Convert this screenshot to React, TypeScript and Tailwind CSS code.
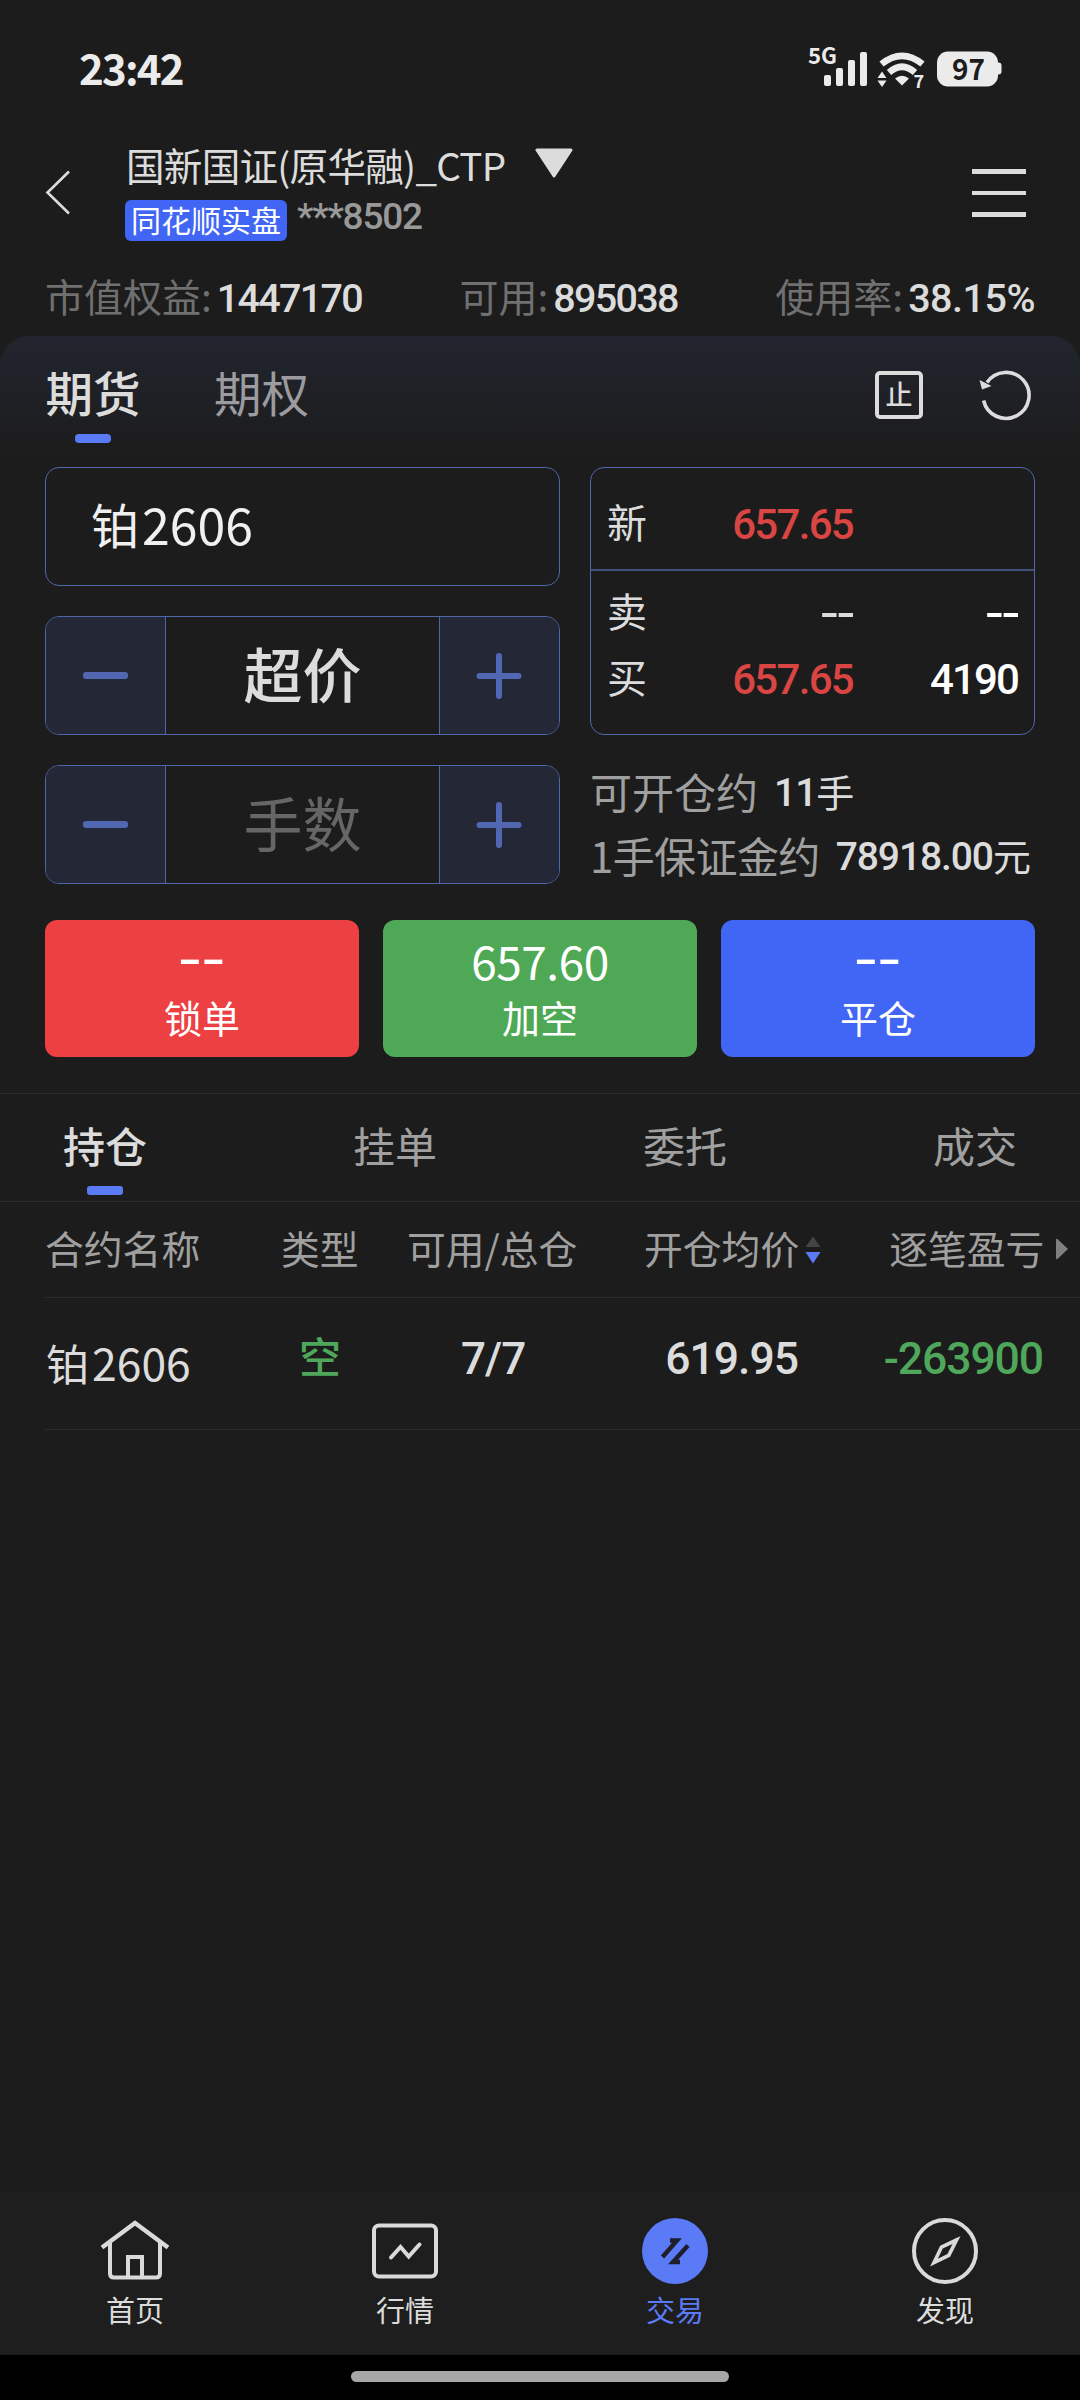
import type { ReactNode } from "react";

const NUM = "font-['Roboto','Liberation_Sans',sans-serif] font-medium leading-none whitespace-nowrap";

function StatusBar() {
  return (
    <div className="flex h-[138px] shrink-0 items-center pl-[79px] pr-[78px] text-[#ebebeb]">
      <span className="pb-[5px] text-[42px] leading-none font-bold tracking-[-1.8px]">23:42</span>
      <svg className="ml-auto overflow-visible" width="194" height="70" viewBox="0 -10 194 70" fill="#ebebeb">
        <text x="0" y="20" fontFamily="Noto Sans CJK SC, sans-serif" fontSize="22.5" fontWeight="700" textLength="29" lengthAdjust="spacingAndGlyphs">5G</text>
        <rect x="16" y="31" width="7" height="11" rx="2" />
        <rect x="28" y="24" width="7" height="18" rx="2" />
        <rect x="40" y="16" width="7" height="26" rx="2" />
        <rect x="52" y="8" width="7" height="34" rx="2" />
        <g fill="none" stroke="#ebebeb" strokeWidth="6.6">
          <path d="M73.500 20 Q94 3.600 114.500 20" />
          <path d="M81 28.500 Q94 17 107 28.500" />
        </g>
        <path d="M87 34.500 Q94 29 101 34.500 L94 41.500 Z" />
        <path d="M69.500 34 L74 27.500 L78.500 34 Z M69.500 36.500 L74 43 L78.500 36.500 Z" />
        <text x="105.500" y="43.500" fontFamily="Noto Sans CJK SC, sans-serif" fontSize="18" fontWeight="700">7</text>
        <rect x="129" y="7.500" width="61" height="35" rx="11" />
        <path d="M189 18.500 h1.5 q3 0 3 3 v6 q0 3 -3 3 h-1.5 Z" />
        <text x="144" y="36" fontFamily="Noto Sans CJK SC, sans-serif" fontSize="29.5" fontWeight="700" fill="#1c1c1c" textLength="33" lengthAdjust="spacingAndGlyphs">97</text>
      </svg>
    </div>
  );
}

function Header() {
  return (
    <div className="flex h-[130px] shrink-0 items-start pt-[8px]">
      <svg className="mt-[24px] ml-[44px] shrink-0" width="28" height="48" viewBox="0 0 28 48" fill="none" stroke="#dcdcdc" strokeWidth="2.6">
        <path d="M25 1.5 L3.5 22.5 L25 43.5" />
      </svg>
      <div className="ml-[53px]">
        <div className="flex h-[40px] items-center">
          <span className="w-[410px] pb-[3px] pl-[1px] text-[38.6px] leading-none tracking-[-0.75px] whitespace-nowrap text-[#dcdcdc]">国新国证(原华融)_CTP</span>
          <svg className="mt-[-5px]" width="38" height="31" viewBox="0 0 38 31" fill="#dcdcdc" stroke="#dcdcdc" strokeWidth="3" strokeLinejoin="round">
            <path d="M2 2 H36 L19 28 Z" />
          </svg>
        </div>
        <div className="mt-[14px] flex h-[41px] items-center">
          <span className="flex h-[41px] w-[162px] items-center justify-center rounded-[6px] bg-[#4166f5] pb-[3px] text-[30px] leading-none whitespace-nowrap text-white">同花顺实盘</span>
          <span className="ml-[10px] pb-[8px] font-['Roboto'] text-[37px] leading-none font-medium tracking-[-1.2px] text-[#999]">***8502</span>
        </div>
      </div>
      <div className="mt-[23px] mr-[54px] ml-auto flex w-[54px] flex-col gap-[17px]">
        <div className="h-[4.5px] bg-[#dcdcdc]" />
        <div className="h-[4.5px] bg-[#dcdcdc]" />
        <div className="h-[4.5px] bg-[#dcdcdc]" />
      </div>
    </div>
  );
}

function Stat({ label, value, spacing }: { label: string; value: string; spacing: string }) {
  return (
    <div className="flex items-center">
      <span className="pb-[8px] text-[39px] leading-none whitespace-nowrap text-[#707070]">{label}</span>
      <span className={`${NUM} ml-[5px] text-[39.5px] text-[#dcdcdc] ${spacing}`}>{value}</span>
    </div>
  );
}

function Stepper({ children }: { children: ReactNode }) {
  return (
    <div className="flex h-[119px] w-[515px] overflow-hidden rounded-[14px] border border-[#4f66aa]">
      <div className="flex w-[120px] items-center justify-center border-r border-[#4f66aa] bg-[#242836]">
        <div className="h-[6.5px] w-[45px] rounded-[3px] bg-[#5267b2]" />
      </div>
      <div className="flex flex-1 items-center justify-center pb-[6px] text-[59px] leading-none">{children}</div>
      <div className="flex w-[120px] items-center justify-center border-l border-[#4f66aa] bg-[#242836] pr-[2px]">
        <svg width="46" height="46" viewBox="0 0 46 46" stroke="#5267b2" strokeWidth="6" strokeLinecap="round">
          <path d="M3.5 23 H42.5 M23 3 V43" />
        </svg>
      </div>
    </div>
  );
}

function QuoteValue({ text }: { text: string }) {
  return <span className={text === "--" ? "inline-block origin-right scale-x-[1.32]" : ""}>{text}</span>;
}

function QuoteRow({ label, price, volume, tone }: { label: string; price: string; volume: string; tone: string }) {
  return (
    <div className="flex h-[66px] items-center">
      <span className="w-[90px] pb-[8px] pl-[16px] text-[40px] leading-none text-[#dcdcdc]">{label}</span>
      <span className={`${NUM} w-[172px] text-right text-[42px] tracking-[-1.7px] ${tone}`}>
        <QuoteValue text={price} />
      </span>
      <span className={`${NUM} w-[165px] text-right text-[42px] tracking-[-1.9px] text-white`}>
        <QuoteValue text={volume} />
      </span>
    </div>
  );
}

function Action({ value, label, bg }: { value: string; label: string; bg: string }) {
  return (
    <div className={`flex h-[137px] w-[314px] flex-col items-center rounded-[12px] text-white ${bg}`}>
      {value === "--" ? (
        <span className="mt-[14px] h-[47px] scale-x-[1.5] font-['Roboto'] text-[46px] leading-[52px] font-medium">{value}</span>
      ) : (
        <span className="mt-[14px] h-[47px] text-[46px] leading-[52px] tracking-[-0.5px]">{value}</span>
      )}
      <span className="mt-[14px] h-[44px] text-[38px] leading-[44px]">{label}</span>
    </div>
  );
}

function NavItem({ label, active, children }: { label: string; active?: boolean; children: ReactNode }) {
  return (
    <div className="flex flex-1 flex-col items-center">
      <svg className="mt-[24px]" width="70" height="70" viewBox="0 0 70 70" fill="none" stroke="#dadada" strokeWidth="4">
        {children}
      </svg>
      <span className={`mt-[7px] text-[29px] leading-[32px] ${active ? "text-[#5b7bf6]" : "text-[#dcdcdc]"}`}>{label}</span>
    </div>
  );
}

export default function App() {
  return (
    <div className="flex h-[2400px] w-[1080px] flex-col overflow-hidden bg-[#1c1c1c] font-['Noto_Sans_CJK_SC',sans-serif]">
      <StatusBar />
      <Header />

      <div className="mb-[6px] flex h-[62px] shrink-0 items-center justify-between pr-[45px] pl-[45px]">
        <Stat label="市值权益:" value="1447170" spacing="tracking-[-1.7px]" />
        <Stat label="可用:" value="895038" spacing="tracking-[-1.7px]" />
        <Stat label="使用率:" value="38.15%" spacing="tracking-[-0.5px]" />
      </div>

      <div className="shrink-0 rounded-t-[30px] bg-[linear-gradient(180deg,#22252f_0px,#1c1c1c_120px)]">
        <div className="flex h-[131px] items-start pt-[29px] pr-[47px] pl-[45px]">
          <div className="flex w-[96px] flex-col items-center">
            <span className="text-[47.5px] leading-[54px] font-medium text-[#dcdcdc]">期货</span>
            <div className="mt-[15px] h-[9px] w-[36px] rounded-[4px] bg-[#5b7bf6]" />
          </div>
          <span className="ml-[73px] text-[47.5px] leading-[54px] text-[#9c9ca0]">期权</span>
          <div className="mt-[6px] ml-auto flex h-[48px] w-[48px] items-center justify-center rounded-[5px] border-4 border-[#dcdcdc] pb-[4px] text-[27px] leading-none font-medium text-[#dcdcdc]">止</div>
          <svg className="mt-[3px] mr-[2px] ml-[54px]" width="54" height="54" viewBox="0 0 54 54" fill="none" stroke="#dcdcdc" strokeWidth="3.6">
            <path d="M6.6 32.5 A23 23 0 1 0 10 14.5" />
            <path d="M2.500 12 L14.500 18 L5 21.5 Z" fill="#dcdcdc" stroke="none" />
          </svg>
        </div>

        <div className="flex justify-between px-[45px]">
          <div className="flex flex-col gap-[30px]">
            <div className="flex h-[119px] w-[515px] items-center rounded-[14px] border border-[#4f66aa] pb-[7px] pl-[45px] text-[48px] leading-none text-[#f0f0f0]">
              铂<span className="ml-[3px] text-[50px]">2606</span>
            </div>
            <Stepper><span className="font-medium text-[#dcdcdc]">超价</span></Stepper>
            <Stepper><span className="text-[#666]">手数</span></Stepper>
          </div>

          <div className="w-[445px]">
            <div className="h-[268px] rounded-[14px] border border-[#4f66aa]">
              <div className="flex h-[103px] items-center border-b-2 border-[#41507f] pt-[13px]">
                <QuoteRow label="新" price="657.65" volume="" tone="text-[#d94543]" />
              </div>
              <div className="mt-[10px]">
                <QuoteRow label="卖" price="--" volume="--" tone="text-[#dcdcdc]" />
                <QuoteRow label="买" price="657.65" volume="4190" tone="text-[#d94543]" />
              </div>
            </div>
            <div className="mt-[26px] flex h-[60px] items-center">
              <span className="text-[42px] leading-none whitespace-nowrap text-[#a0a0a0]">可开仓约</span>
              <span className={`${NUM} ml-[16px] pt-[4px] text-[39px] tracking-[-1px] text-[#dcdcdc]`}>11</span>
              <span className="text-[38px] leading-none text-[#dcdcdc]">手</span>
            </div>
            <div className="mt-[5px] flex h-[58px] items-center whitespace-nowrap">
              <span className="text-[42px] leading-none tracking-[-0.6px] text-[#a0a0a0]">1手保证金约</span>
              <span className={`${NUM} ml-[16px] pt-[4px] text-[39px] tracking-[-1.1px] text-[#dcdcdc]`}>78918.00</span>
              <span className="text-[38px] leading-none text-[#dcdcdc]">元</span>
            </div>
          </div>
        </div>

        <div className="mt-[36px] flex justify-between px-[45px]">
          <Action value="--" label="锁单" bg="bg-[#ec4042]" />
          <Action value="657.60" label="加空" bg="bg-[#4ea855]" />
          <Action value="--" label="平仓" bg="bg-[#4166f6]" />
        </div>
      </div>

      <div className="mt-[36px] flex h-[108px] shrink-0 justify-between border-t border-[#2d2d2d] px-[63px] pt-[24px] text-[42px] leading-[54px] text-[#a0a0a0]">
        <div className="flex flex-col items-center">
          <span className="font-medium text-[#dcdcdc]">持仓</span>
          <div className="mt-[14px] h-[9px] w-[36px] rounded-[3px] bg-[#5b7bf6]" />
        </div>
        <span>挂单</span>
        <span>委托</span>
        <span>成交</span>
      </div>

      <div className="flex h-[96px] shrink-0 items-center border-t border-[#2d2d2d] pb-[5px] pl-[45px] text-[38.8px] leading-none whitespace-nowrap text-[#a0a0a0]">
        <span className="w-[236px]">合约名称</span>
        <span className="w-[126px]">类型</span>
        <span className="w-[237px]">可用/总仓</span>
        <span>开仓均价</span>
        <svg className="mt-[6px] ml-[6px]" width="16" height="28" viewBox="0 0 16 28">
          <path d="M0.5 11 L8 0.5 L15.5 11 Z" fill="#444" />
          <path d="M0.5 16 L8 27.5 L15.5 16 Z" fill="#5b7bf6" />
        </svg>
        <span className="ml-[68px]">逐笔盈亏</span>
        <svg className="mt-[4px] ml-[11px]" width="14" height="22" viewBox="0 0 14 22">
          <path d="M1 2 Q1 0 3 1.5 L13 11 L3 20.5 Q1 22 1 20 Z" fill="#808080" />
        </svg>
      </div>

      <div className="ml-[45px] flex h-[133px] shrink-0 items-center border-y border-[#2d2d2d] whitespace-nowrap text-[#dcdcdc]">
        <span className="flex w-[254px] items-center pb-[3px] pl-[1px] text-[43px] leading-none">
          铂<span className="ml-[3px] text-[44.5px]">2606</span>
        </span>
        <span className="w-[162px] pb-[17px] text-[42px] leading-none font-medium text-[#4fa75b]">空</span>
        <span className={`${NUM} w-[180px] pb-[9px] text-[44px] tracking-[-1px]`}>7/7</span>
        <span className={`${NUM} w-[157px] pb-[9px] text-right text-[44.5px] tracking-[-1px]`}>619.95</span>
        <span className={`${NUM} w-[245px] pb-[9px] text-right text-[44.5px] tracking-[-1.1px] text-[#4fa75b]`}>-263900</span>
      </div>

      <div className="mt-auto flex h-[163px] shrink-0 bg-[#1e1e1e]">
        <NavItem label="首页">
          <path d="M2 31.500 L35 7 L68 31.500" strokeWidth="4.400" />
          <path d="M10 27 V57.500 Q10 61.500 14 61.500 H56 Q60 61.500 60 57.500 V27" />
          <path d="M28 61.500 V41 H42 V61.500" />
        </NavItem>
        <NavItem label="行情">
          <rect x="4" y="9.500" width="62" height="51" rx="5" />
          <path d="M21 41.500 L30.500 31 L38.700 40.500 L49.500 28.500" strokeLinecap="round" />
        </NavItem>
        <NavItem label="交易" active>
          <circle cx="35" cy="35" r="33" fill="#5b7bf6" stroke="none" />
          <path d="M22.500 41 L37 24.500 H30 M48 29.500 L33 46 H40" stroke="#1e1e2c" strokeWidth="4.400" />
        </NavItem>
        <NavItem label="发现">
          <circle cx="35" cy="35" r="31" />
          <path d="M46.500 24 L31.500 31 L24 46.500 L38.800 39.300 Z" strokeWidth="3.600" />
        </NavItem>
      </div>
      <div className="flex h-[45px] shrink-0 justify-center bg-black pt-[16px]">
        <div className="h-[11px] w-[378px] rounded-full bg-[#a6a6a6]" />
      </div>
    </div>
  );
}
